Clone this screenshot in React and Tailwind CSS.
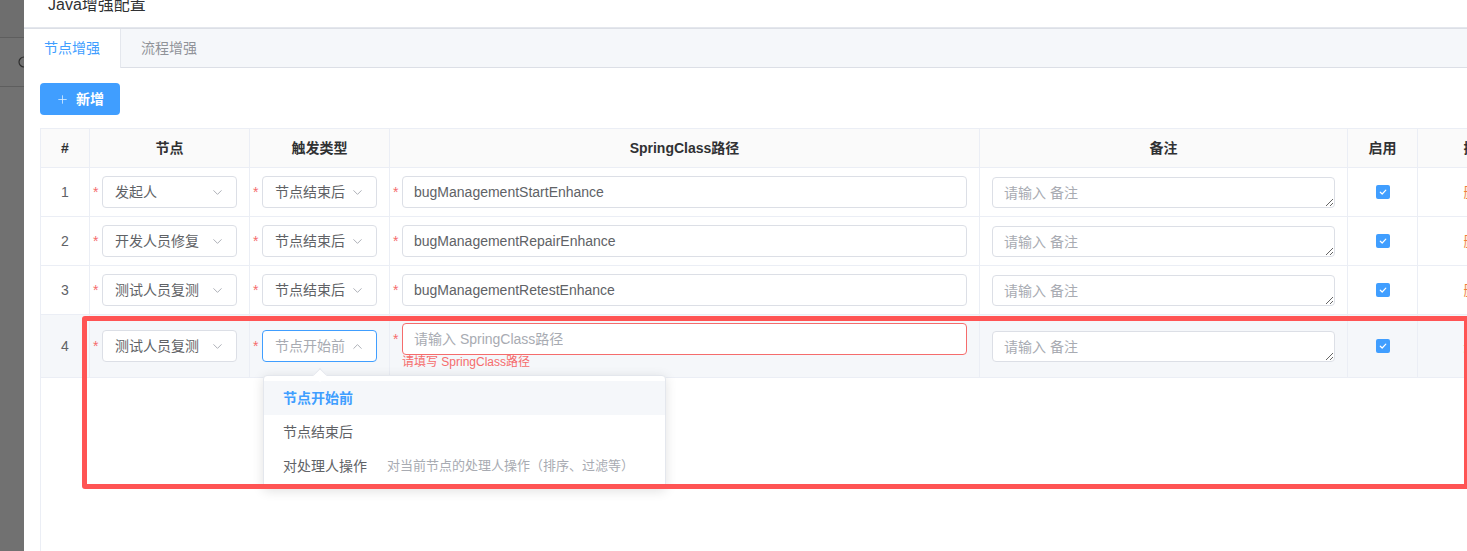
import React from 'react';
import { ChevronDown, ChevronUp, Plus } from 'lucide-react';

function Asterisk() {
  return <span className="w-[9px] shrink-0 text-[14px] leading-[20px] text-[#f56c6c]">*</span>;
}

function Select({ value, placeholder, open }) {
  return (
    <div
      className={`flex-1 min-w-0 h-[32px] flex items-center bg-white rounded-[4px] border pl-[12px] pr-[11px] ${
        open ? 'border-[#409eff]' : 'border-[#dcdfe6]'
      }`}
    >
      <span className={`flex-1 min-w-0 truncate text-[14px] leading-[20px] ${value ? 'text-[#606266]' : 'text-[#a8abb2]'}`}>
        {value || placeholder}
      </span>
      {open ? (
        <ChevronUp size={15} strokeWidth={1.5} color="#a8abb2" className="shrink-0" />
      ) : (
        <ChevronDown size={15} strokeWidth={1.5} color="#a8abb2" className="shrink-0" />
      )}
    </div>
  );
}

function TextInput({ value, placeholder, error }) {
  return (
    <div
      className={`flex-1 min-w-0 h-[32px] flex items-center bg-white rounded-[4px] border px-[11px] ${
        error ? 'border-[#f56c6c]' : 'border-[#dcdfe6]'
      }`}
    >
      <span className={`truncate text-[14px] leading-[20px] ${value ? 'text-[#606266]' : 'text-[#a8abb2]'}`}>
        {value || placeholder}
      </span>
    </div>
  );
}

function Remark() {
  return (
    <textarea
      readOnly
      placeholder="请输入 备注"
      className="w-full h-[31px] bg-white rounded-[4px] border border-[#dcdfe6] pl-[11px] pr-[11px] pt-[5px] pb-[4px] text-[14px] leading-[20px] text-[#606266] placeholder:text-[#a8abb2] overflow-hidden outline-none block"
    />
  );
}

function Checkbox() {
  return (
    <div className="w-[14px] h-[14px] rounded-[2px] bg-[#409eff] flex items-center justify-center">
      <svg width="10" height="10" viewBox="0 0 10 10">
        <path d="M2.3 5.2 L4.2 7 L7.8 3.2" fill="none" stroke="white" strokeWidth="1.2" strokeLinecap="round" strokeLinejoin="round" />
      </svg>
    </div>
  );
}

const rows = [
  { n: 1, node: '发起人', type: '节点结束后', cls: 'bugManagementStartEnhance' },
  { n: 2, node: '开发人员修复', type: '节点结束后', cls: 'bugManagementRepairEnhance' },
  { n: 3, node: '测试人员复测', type: '节点结束后', cls: 'bugManagementRetestEnhance' },
];

function HeaderRow() {
  const th = 'shrink-0 flex items-center justify-center border-r border-[#ebeef5] text-[14px] font-bold text-[#303133]';
  return (
    <div className="flex h-[39px] bg-[#fafafa] border-b border-[#ebeef5]">
      <div className={`${th} w-[49px]`}>#</div>
      <div className={`${th} w-[160px]`}>节点</div>
      <div className={`${th} w-[140px]`}>触发类型</div>
      <div className={`${th} w-[590px]`}>SpringClass路径</div>
      <div className={`${th} w-[368px]`}>备注</div>
      <div className={`${th} w-[70px]`}>启用</div>
      <div className={`${th} w-[120px]`}>操作</div>
    </div>
  );
}

function DataRow({ r }) {
  const td = 'shrink-0 flex items-center border-r border-[#ebeef5]';
  return (
    <div className="flex h-[49px] bg-white border-b border-[#ebeef5]">
      <div className={`${td} w-[49px] justify-center text-[14px] text-[#606266]`}>{r.n}</div>
      <div className={`${td} w-[160px] pl-[3px] pr-[12px]`}>
        <Asterisk />
        <Select value={r.node} />
      </div>
      <div className={`${td} w-[140px] pl-[3px] pr-[12px]`}>
        <Asterisk />
        <Select value={r.type} />
      </div>
      <div className={`${td} w-[590px] pl-[3px] pr-[12px]`}>
        <Asterisk />
        <TextInput value={r.cls} />
      </div>
      <div className={`${td} w-[368px] px-[12px]`}>
        <Remark />
      </div>
      <div className={`${td} w-[70px] justify-center`}>
        <Checkbox />
      </div>
      <div className={`${td} w-[120px] justify-center text-[14px] text-[#f0803c]`}>删除</div>
    </div>
  );
}

function EditRow() {
  const td = 'shrink-0 flex items-center border-r border-[#ebeef5]';
  return (
    <div className="flex h-[63px] bg-[#f5f7fa] border-b border-[#ebeef5]">
      <div className={`${td} w-[49px] justify-center text-[14px] text-[#606266]`}>4</div>
      <div className={`${td} w-[160px] pl-[3px] pr-[12px]`}>
        <Asterisk />
        <Select value="测试人员复测" />
      </div>
      <div className={`${td} w-[140px] pl-[3px] pr-[12px]`}>
        <Asterisk />
        <Select placeholder="节点开始前" open />
      </div>
      <div className="shrink-0 flex flex-col justify-center border-r border-[#ebeef5] w-[590px] pl-[3px] pr-[12px]">
        <div className="flex items-center">
          <Asterisk />
          <TextInput placeholder="请输入 SpringClass路径" error />
        </div>
        <div className="pl-[9px] text-[12px] leading-[15px] text-[#f56c6c]">请填写 SpringClass路径</div>
      </div>
      <div className={`${td} w-[368px] px-[12px]`}>
        <Remark />
      </div>
      <div className={`${td} w-[70px] justify-center`}>
        <Checkbox />
      </div>
      <div className={`${td} w-[120px] justify-center text-[14px] text-[#f0803c]`}>删除</div>
    </div>
  );
}

export default function App() {
  return (
    <div className="relative w-[1467px] h-[551px] overflow-hidden flex bg-white font-['Liberation_Sans','Noto_Sans_CJK_SC',sans-serif]">
      {/* masked background strip */}
      <div className="w-[24px] shrink-0 overflow-hidden bg-[#717171] flex flex-col">
        <div className="h-[37px] bg-[#6e6e6e]" />
        <div className="h-px bg-[#5e5e5e]" />
        <div className="h-[48px] flex items-center pl-[18px]">
          <svg width="12" height="12" viewBox="0 0 12 12" className="shrink-0">
            <circle cx="6" cy="6" r="5" fill="none" stroke="#2e2e2e" strokeWidth="1.2" />
          </svg>
        </div>
        <div className="h-px bg-[#5e5e5e]" />
        <div className="flex-1" />
      </div>

      {/* modal */}
      <div className="flex-1 min-w-0 flex flex-col bg-white">
        <div className="h-[28px] shrink-0 overflow-hidden border-b border-[#e4e7ed] pl-[24px]">
          <div className="-mt-[3px] text-[16px] leading-[16px] text-[#303133]">Java增强配置</div>
        </div>
        <div className="h-[40px] shrink-0 flex bg-[#f5f7fa] border-t border-b border-[#dcdfe6]">
          <div className="h-[39px] -mb-px px-[20px] flex items-center bg-white border-r border-[#e4e7ed] text-[14px] text-[#409eff]">
            节点增强
          </div>
          <div className="px-[20px] flex items-center text-[14px] text-[#909399]">流程增强</div>
        </div>

        <div className="flex-1 min-h-0 flex flex-col pl-[16px] pt-[15px]">
          <button className="w-[80px] h-[32px] shrink-0 rounded-[4px] bg-[#409eff] flex items-center justify-center gap-[7px] text-white">
            <Plus size={13} strokeWidth={1.5} color="#d9ecff" />
            <span className="text-[14px] font-bold">新增</span>
          </button>

          <div className="mt-[13px] flex-1 border-l border-t border-[#ebeef5] flex flex-col">
            <HeaderRow />
            {rows.map((r) => (
              <DataRow key={r.n} r={r} />
            ))}
            <EditRow />
          </div>
        </div>
      </div>

      {/* dropdown */}
      <div className="absolute left-[263px] top-[375px] w-[403px] bg-white border border-[#e4e7ed] rounded-[4px] shadow-[0_2px_12px_0_rgba(0,0,0,0.12)] py-[5px]">
        <div className="absolute -top-[6px] left-[51px] w-[10px] h-[10px] rotate-45 bg-white border-l border-t border-[#e4e7ed]" />
        <div className="h-[34px] px-[19px] flex items-center bg-[#f5f7fa] text-[14px] font-bold text-[#409eff]">节点开始前</div>
        <div className="h-[34px] px-[19px] flex items-center text-[14px] text-[#606266]">节点结束后</div>
        <div className="h-[34px] px-[19px] flex items-center">
          <span className="text-[14px] text-[#606266]">对处理人操作</span>
          <span className="ml-[20px] text-[13px] text-[#a8abb2]">对当前节点的处理人操作（排序、过滤等）</span>
        </div>
      </div>

      {/* annotation */}
      <div className="absolute left-[82px] top-[316px] w-[1387px] h-[173px] border-[5px] border-[#ff5454] rounded-[3px] pointer-events-none" />
    </div>
  );
}
